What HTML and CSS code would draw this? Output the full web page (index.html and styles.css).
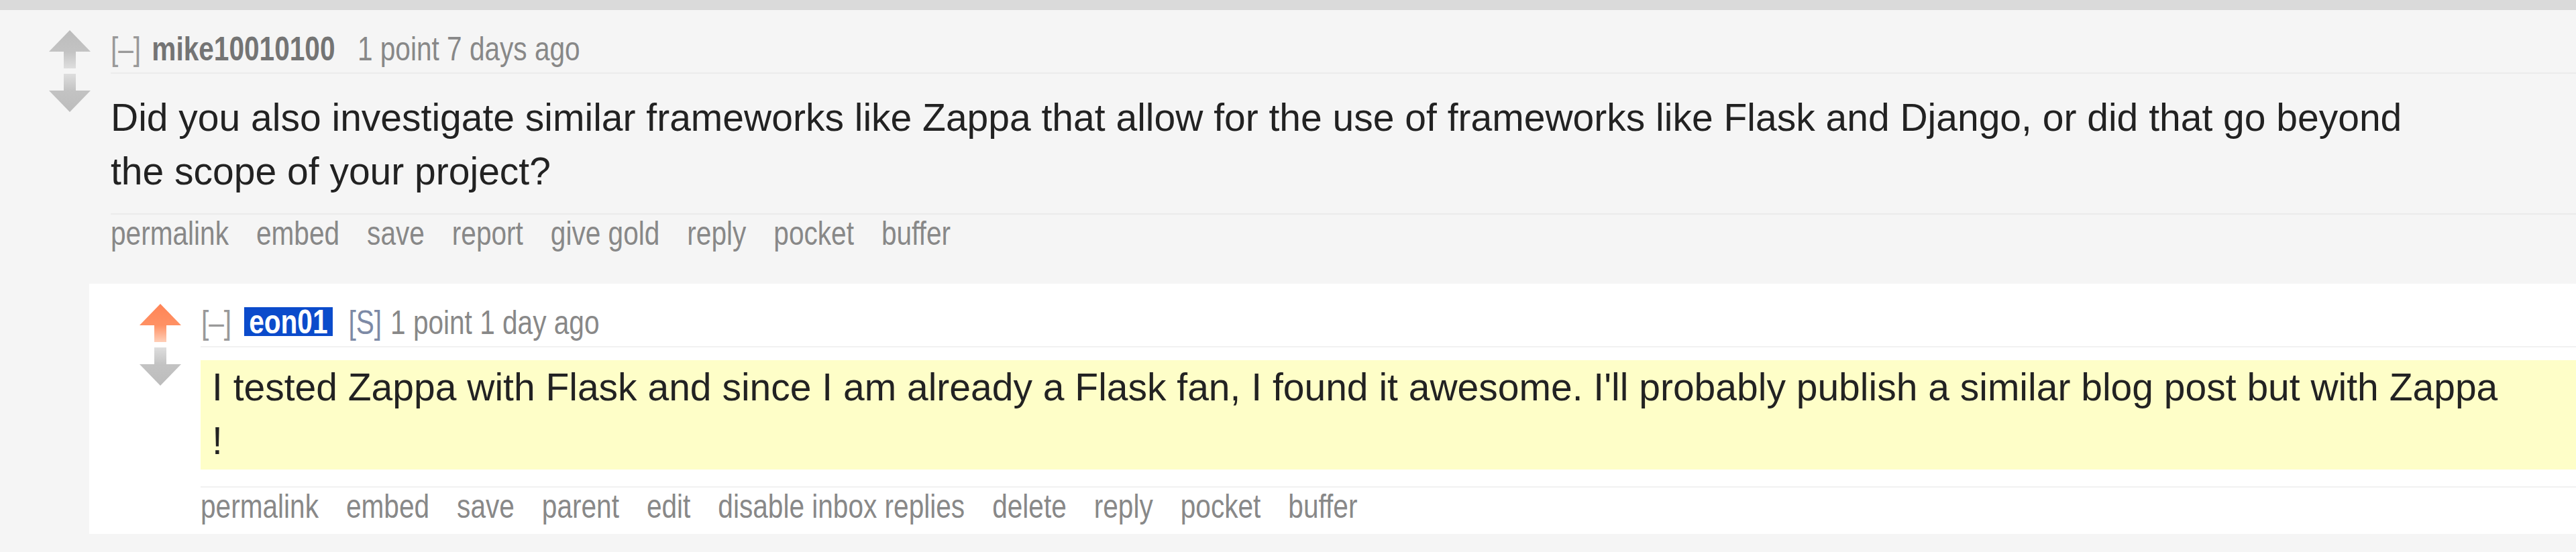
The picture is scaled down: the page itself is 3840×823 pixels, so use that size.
FILE: index.html
```html
<!DOCTYPE html>
<html lang="en">
<head>
<meta charset="utf-8">
<title>Comment thread</title>
<link rel="stylesheet" href="styles.css">
</head>
<body>
<div class="topbar"></div>
<div class="comment top-level">
  <div class="row">
    <div class="midcol">
      <svg class="arrow" viewBox="0 0 62 57" aria-label="upvote">
        <defs>
          <linearGradient id="g-up" x1="0" y1="0" x2="0" y2="1">
            <stop offset="0" stop-color="#bcbcbc"/>
            <stop offset="0.56" stop-color="#c3c3c3"/>
            <stop offset="1" stop-color="#dedede"/>
          </linearGradient>
        </defs>
        <polygon points="31,0 62,32 40,32 40,57 22,57 22,32 0,32" fill="url(#g-up)"/>
      </svg>
      <svg class="arrow" viewBox="0 0 62 57" aria-label="downvote">
        <defs>
          <linearGradient id="g-down" x1="0" y1="0" x2="0" y2="1">
            <stop offset="0" stop-color="#dedede"/>
            <stop offset="0.44" stop-color="#c3c3c3"/>
            <stop offset="1" stop-color="#bcbcbc"/>
          </linearGradient>
        </defs>
        <polygon points="22,0 40,0 40,25 62,25 31,57 0,25 22,25" fill="url(#g-down)"/>
      </svg>
    </div>
    <div class="entry">
      <p class="tagline"><span class="narrow"><span class="expand">[–]</span> <span class="author">mike10010100</span> <span class="score">1 point</span> <time>7 days ago</time></span></p>
      <div class="usertext-body">
        <div class="md"><p>Did you also investigate similar frameworks like Zappa that allow for the use of frameworks like Flask and Django, or did that go beyond the scope of your project?</p></div>
      </div>
      <div class="buttons">
        <ul class="flat-list narrow">
          <li>permalink</li><li>embed</li><li>save</li><li>report</li><li>give gold</li><li>reply</li><li>pocket</li><li>buffer</li>
        </ul>
      </div>
    </div>
  </div>
  <div class="child">
    <div class="comment nested">
      <div class="row">
        <div class="midcol">
          <svg class="arrow" viewBox="0 0 62 57" aria-label="upvoted">
            <defs>
              <linearGradient id="g-upmod" x1="0" y1="0" x2="0" y2="1">
                <stop offset="0" stop-color="#ff8456"/>
                <stop offset="0.56" stop-color="#ff9164"/>
                <stop offset="1" stop-color="#ffcfb8"/>
              </linearGradient>
            </defs>
            <polygon points="31,0 62,32 40,32 40,57 22,57 22,32 0,32" fill="url(#g-upmod)"/>
          </svg>
          <svg class="arrow" viewBox="0 0 62 57" aria-label="downvote">
            <polygon points="22,0 40,0 40,25 62,25 31,57 0,25 22,25" fill="url(#g-down)"/>
          </svg>
        </div>
        <div class="entry">
          <p class="tagline"><span class="narrow"><span class="expand">[–]</span> <span class="author op">eon01</span> <span class="submitter">[S]</span> <span class="score">1 point</span> <time>1 day ago</time></span></p>
          <div class="usertext-body highlight">
            <div class="md"><p>I tested Zappa with Flask and since I am already a Flask fan, I found it awesome. I'll probably publish a similar blog post but with Zappa !</p></div>
          </div>
          <div class="buttons">
            <ul class="flat-list narrow">
              <li>permalink</li><li>embed</li><li>save</li><li>parent</li><li>edit</li><li>disable inbox replies</li><li>delete</li><li>reply</li><li>pocket</li><li>buffer</li>
            </ul>
          </div>
        </div>
      </div>
    </div>
  </div>
</div>
</body>
</html>
```

FILE: styles.css
```css
html, body {
  margin: 0;
  padding: 0;
}

body {
  background: #f5f5f5;
  font-family: "Liberation Sans", Arial, sans-serif;
  color: #222;
  min-height: 823px;
}

.topbar {
  height: 15px;
  background: #dadada;
}

.comment.top-level {
  padding: 30px 0 0 73px;
}

.row {
  display: flex;
  gap: 30px;
}

.midcol {
  width: 62px;
  flex-shrink: 0;
  display: flex;
  flex-direction: column;
  gap: 8px;
}

.arrow {
  display: block;
  width: 62px;
  height: 57px;
}

.entry {
  flex: 1;
  min-width: 0;
}

/* condensed text, emulating a narrow face */
.narrow {
  display: inline-block;
  transform: scaleX(0.82);
  transform-origin: 0 0;
}

.tagline {
  margin: 0;
  height: 56px;
  padding-bottom: 7px;
  border-bottom: 2px solid #ebebeb;
  font-size: 49.5px;
  line-height: 56px;
  color: #888;
  white-space: nowrap;
}

.expand {
  color: #999;
}

.author {
  font-weight: bold;
  color: #747474;
  margin: 0 27px 0 6px;
}

.author.op {
  display: inline-block;
  height: 43px;
  line-height: 43px;
  padding: 0 9px;
  margin: 0 15px 0 9px;
  background: #0b4bcb;
  color: #fff;
  vertical-align: 1px;
}

.submitter {
  color: #7d8aa6;
  margin-right: 2px;
}

.usertext-body {
  margin-top: 25px;
}

.md {
  max-width: 60em;
  font-size: 57px;
  line-height: 80px;
  color: #222;
}

.md p {
  margin: 0;
}

.buttons {
  margin-top: 23px;
  border-top: 2px solid #ebebeb;
  height: 56px;
}

.flat-list {
  list-style: none;
  margin: 0;
  padding: 0;
  display: inline-flex;
  gap: 50px;
  font-size: 49.5px;
  line-height: 56px;
  color: #888;
  white-space: nowrap;
}

.child {
  margin: 47px 0 0 60px;
}

.comment.nested {
  background: #fff;
  padding: 30px 0 13px 75px;
}

.comment.nested .row {
  gap: 29px;
}

.comment.nested .tagline,
.comment.nested .buttons {
  border-color: #f1f1f1;
}

.comment.nested .tagline {
  padding-left: 1px;
}

.comment.nested .buttons {
  margin-top: 25px;
}

.usertext-body.highlight {
  margin-top: 19px;
  padding: 0 0 3px 17px;
  background: #fefec8;
}
```
